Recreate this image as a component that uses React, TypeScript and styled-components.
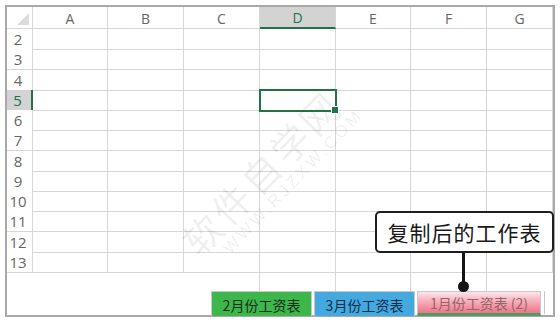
import styled, { createGlobalStyle, css } from "styled-components";

const GlobalStyle = createGlobalStyle`
  html, body {
    margin: 0;
    padding: 0;
    background: #ffffff;
  }
`;

const COLS = ["A", "B", "C", "D", "E", "F", "G"];
const ROWS = [2, 3, 4, 5, 6, 7, 8, 9, 10, 11, 12, 13];
const SEL_COL = "D";
const SEL_ROW = 5;
const GRID_COLS = "26px 75px 76px 76px 76px 75px 76px 1fr";
const LINE = "#d6d6d6";
const GREEN = "#217346";

const Page = styled.div`
  position: relative;
  width: 560px;
  height: 325px;
  padding: 5px 5px 0 5px;
  box-sizing: border-box;
  overflow: hidden;
`;

const Frame = styled.div`
  width: 550px;
  height: 312px;
  box-sizing: border-box;
  border: 2px solid #a9a9a9;
  display: flex;
  flex-direction: column;
  background: #fff;
`;

const Row = styled.div<{ h: number }>`
  display: grid;
  grid-template-columns: ${GRID_COLS};
  height: ${(p) => p.h}px;
  flex-shrink: 0;
`;

const headText = css`
  font-family: "Open Sans", "Liberation Sans", sans-serif;
  font-size: 14px;
  color: #666;
  display: flex;
  align-items: center;
  justify-content: center;
  box-sizing: border-box;
`;

const Corner = styled.div`
  ${headText};
  align-items: flex-end;
  justify-content: flex-end;
  padding: 0 3px 3px 0;
  border-right: 1px solid ${LINE};
  border-bottom: 1px solid ${LINE};
`;

const ColHead = styled.div<{ active?: boolean }>`
  ${headText};
  border-right: 1px solid ${LINE};
  border-bottom: ${(p) => (p.active ? `2px solid ${GREEN}` : `1px solid ${LINE}`)};
  background: ${(p) => (p.active ? "#d3d3d3" : "#fff")};
  color: ${(p) => (p.active ? GREEN : "#666")};
  padding-top: 1px;
`;

const RowHead = styled.div<{ active?: boolean }>`
  ${headText};
  font-size: 15px;
  padding-right: 3px;
  border-right: ${(p) => (p.active ? `2px solid ${GREEN}` : `1px solid ${LINE}`)};
  border-bottom: 1px solid ${LINE};
  background: ${(p) => (p.active ? "#d3d3d3" : "#fff")};
  color: ${(p) => (p.active ? GREEN : "#666")};
`;

const Cell = styled.div<{ selected?: boolean }>`
  box-sizing: border-box;
  border-right: 1px solid ${LINE};
  border-bottom: 1px solid ${LINE};
  position: relative;
  ${(p) =>
    p.selected &&
    css`
      outline: 2px solid ${GREEN};
      outline-offset: -1px;
      z-index: 2;
      &::after {
        content: "";
        position: absolute;
        right: -4px;
        bottom: -4px;
        width: 6px;
        height: 6px;
        background: ${GREEN};
        border: 1px solid #fff;
      }
    `}
`;

const TailCell = styled.div<{ line?: boolean }>`
  box-sizing: border-box;
  border-right: ${(p) => (p.line ? `1px solid ${LINE}` : "none")};
`;

const TabBar = styled.div`
  flex: 1;
  display: flex;
  align-items: stretch;
  padding-left: 204px;
  gap: 2px;
`;

const Tab = styled.div<{ bg: string; fg: string; active?: boolean }>`
  width: ${(p) => (p.active ? 124 : 101)}px;
  box-sizing: border-box;
  display: flex;
  align-items: center;
  justify-content: center;
  font-family: "Noto Sans CJK SC", "Noto Sans", sans-serif;
  font-size: 14px;
  color: ${(p) => p.fg};
  background: ${(p) => p.bg};
  border: 1px solid #c9c9c9;
  border-bottom: ${(p) => (p.active ? "3px solid #4f9c62" : "none")};
  padding-top: 1px;
`;

const TabEnd = styled.div`
  width: 8px;
  margin-left: 1px;
  box-sizing: border-box;
  border-left: 1px solid #c9c9c9;
  margin-bottom: 2px;
`;

const Callout = styled.div`
  position: absolute;
  left: 375px;
  top: 211px;
  width: 179px;
  height: 42px;
  box-sizing: border-box;
  border: 2.5px solid #1e1e1e;
  border-radius: 5px;
  background: #fff;
  display: flex;
  align-items: center;
  justify-content: center;
  font-family: "Noto Sans CJK SC", "Noto Sans", sans-serif;
  font-size: 21px;
  letter-spacing: 1px;
  color: #1a1a1a;
  z-index: 5;
`;

const Stem = styled.div`
  position: absolute;
  left: 462px;
  top: 252px;
  width: 3px;
  height: 35px;
  background: #151515;
  z-index: 5;
  &::after {
    content: "";
    position: absolute;
    left: -4px;
    bottom: -5px;
    width: 11px;
    height: 11px;
    border-radius: 50%;
    background: #151515;
  }
`;

const Watermark = styled.div`
  position: absolute;
  left: 148px;
  top: 148px;
  width: 240px;
  transform: rotate(-46deg);
  transform-origin: center;
  display: flex;
  flex-direction: column;
  align-items: center;
  pointer-events: none;
  z-index: 1;
  color: rgba(0, 0, 0, 0.07);
  line-height: 1.1;
`;

const WmBig = styled.span`
  font-family: "Noto Sans CJK SC", sans-serif;
  font-size: 38px;
  letter-spacing: 4px;
`;

const WmSmall = styled.span`
  font-family: "Liberation Sans", sans-serif;
  font-size: 17px;
  letter-spacing: 3px;
  margin-left: 30px;
`;

export default function App() {
  return (
    <>
      <GlobalStyle />
      <Page>
        <Frame>
          <Row h={22}>
            <Corner>
              <svg width="12" height="12" viewBox="0 0 12 12">
                <polygon points="12,0 12,12 0,12" fill="#dcdcdc" />
              </svg>
            </Corner>
            {COLS.map((c) => (
              <ColHead key={c} active={c === SEL_COL}>
                {c}
              </ColHead>
            ))}
          </Row>
          {ROWS.map((r) => (
            <Row key={r} h={20.25}>
              <RowHead active={r === SEL_ROW}>{r}</RowHead>
              {COLS.map((c) => (
                <Cell key={c} selected={r === SEL_ROW && c === SEL_COL} />
              ))}
            </Row>
          ))}
          <Row h={19}>
            <TailCell />
            {COLS.map((c) => (
              <TailCell key={c} line={["C", "D", "E", "F"].includes(c)} />
            ))}
          </Row>
          <TabBar>
            <Tab bg="#3db64c" fg="#16301a">
              2月份工资表
            </Tab>
            <Tab bg="#43a9df" fg="#132f4a">
              3月份工资表
            </Tab>
            <Tab
              active
              bg="linear-gradient(to bottom, #fde6ea 0%, #f7b3be 40%, #ee7489 100%)"
              fg="#946468"
            >
              1月份工资表 (2)
            </Tab>
            <TabEnd />
          </TabBar>
        </Frame>
        <Watermark>
          <WmBig>软件自学网</WmBig>
          <WmSmall>WWW.RJZXW.COM</WmSmall>
        </Watermark>
        <Callout>复制后的工作表</Callout>
        <Stem />
      </Page>
    </>
  );
}
